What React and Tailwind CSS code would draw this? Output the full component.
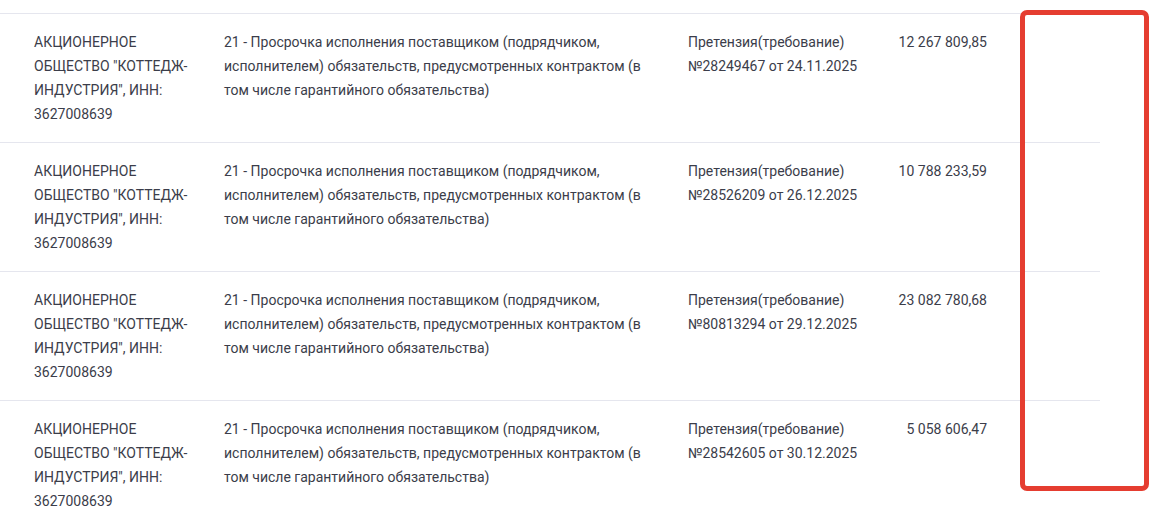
import React from "react";

const rows = [
  { doc: "Претензия(требование) №28249467 от 24.11.2025", sum: "12 267 809,85" },
  { doc: "Претензия(требование) №28526209 от 26.12.2025", sum: "10 788 233,59" },
  { doc: "Претензия(требование) №80813294 от 29.12.2025", sum: "23 082 780,68" },
  { doc: "Претензия(требование) №28542605 от 30.12.2025", sum: "5 058 606,47" },
];

function App() {
  return (
    <div
      className="relative w-[1163px] h-[517px] overflow-hidden bg-white text-[14px] leading-6 text-[#3b3d4a]"
      style={{ fontFamily: "Roboto, 'Liberation Sans', sans-serif" }}
    >
      <div className="pt-[13px] w-[1100px]">
        {rows.map((r, i) => (
          <div key={i} className="flex border-t border-[#e5e6ee] pt-4 pb-4 h-[129px]">
            {/* Заказчик */}
            <div className="w-[208px] pl-[34px] pr-3">
              АКЦИОНЕРНОЕ ОБЩЕСТВО "КОТТЕДЖ-ИНДУСТРИЯ", ИНН: 3627008639
            </div>
            {/* Основание */}
            <div className="w-[464px] pl-4 pr-4">
              21 - Просрочка исполнения поставщиком (подрядчиком, исполнителем)
              обязательств, предусмотренных контрактом (в том числе гарантийного
              обязательства)
            </div>
            {/* Документ */}
            <div className="w-[205px] pl-4">{r.doc}</div>
            {/* Сумма */}
            <div className="w-[110px] text-right">{r.sum}</div>
            <div className="flex-1" />
          </div>
        ))}
      </div>

      {/* highlight */}
      <div className="absolute left-[1020px] top-[10px] w-[129px] h-[481px] border-[5px] border-[#e53d30] rounded-[7px]" />
    </div>
  );
}

export default App;
